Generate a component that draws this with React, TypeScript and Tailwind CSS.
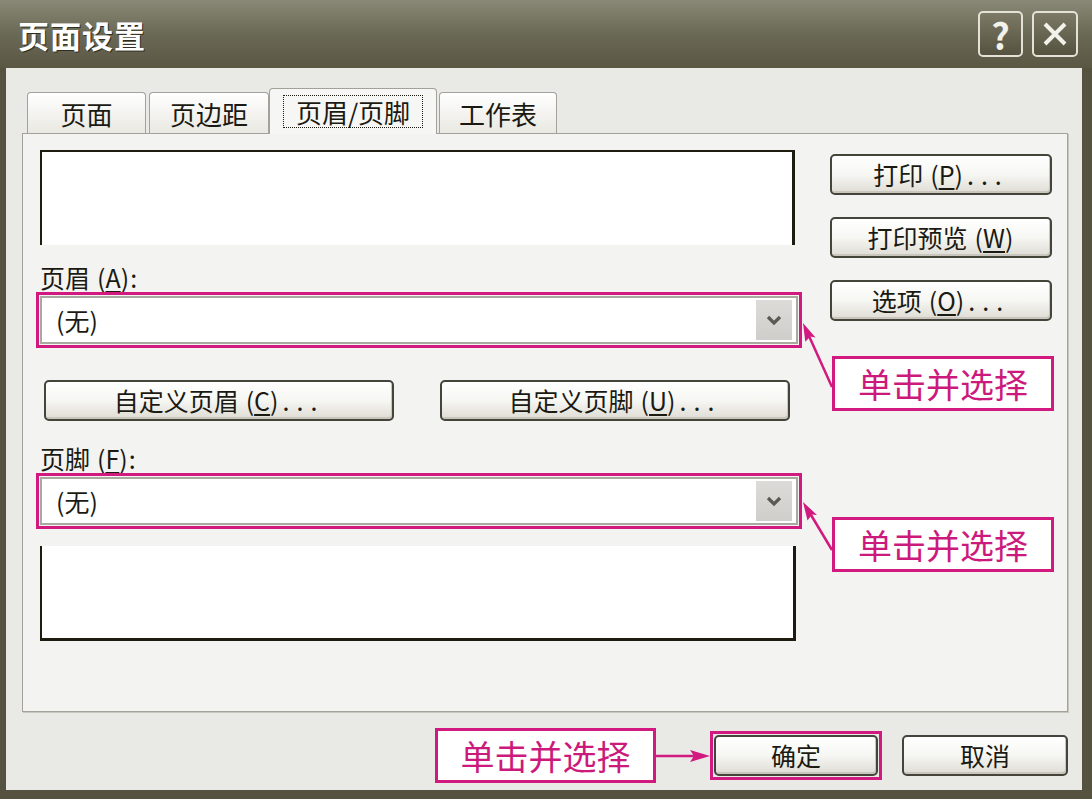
import type { ReactNode } from "react";

const font = "font-['Noto_Sans_CJK_SC','Noto_Sans',sans-serif]";

function Key({ k }: { k: string }) {
  return (
    <span className="ml-[7px] mr-[1px]">
      (<span className="underline underline-offset-[3px] decoration-[1.5px]">{k}</span>)
    </span>
  );
}

function Dots() {
  return <span className="ml-[3px] tracking-[7px]">...</span>;
}

function Button({ children, className = "" }: { children: ReactNode; className?: string }) {
  return (
    <div
      className={`flex h-[41px] items-center justify-center rounded-[5px] border-2 border-[#45443a] bg-gradient-to-b from-white via-[#f6f6f3] to-[#dedcd4] text-[25px] leading-none text-[#1b1a12] shadow-[inset_-1px_-2px_0_#c9c7bd] ${className}`}
    >
      {children}
    </div>
  );
}

function Select() {
  return (
    <div className="h-[56px] border-[3px] border-[#d2197f] p-px">
      <div className="flex h-full items-center border-2 border-[#a9a8a1] bg-white pl-[14px] pr-[4px]">
        <span className="text-[25px] leading-none text-[#1b1a12]">(无)</span>
        <div className="ml-auto flex h-[40px] w-[36px] items-center justify-center bg-gradient-to-b from-[#dcdbd8] to-[#cfcecb]">
          <svg width="16" height="12" viewBox="0 0 16 12">
            <path d="M2 3 L8 9 L14 3" fill="none" stroke="#5b5a52" strokeWidth="3.2" />
          </svg>
        </div>
      </div>
    </div>
  );
}

function Callout({ className = "" }: { className?: string }) {
  return (
    <div
      className={`flex h-[55px] items-center justify-center border-[3px] border-[#d2197f] bg-white text-[34px] leading-none text-[#cc1a7c] ${className}`}
    >
      单击并选择
    </div>
  );
}

function Tab({ label, active = false, w }: { label: string; active?: boolean; w: string }) {
  if (active) {
    return (
      <div
        className={`relative z-10 -mb-px flex h-[46px] ${w} items-center justify-center rounded-t-[4px] border border-b-0 border-[#a3a199] bg-[#f6f6f4]`}
      >
        <span className="border border-dotted border-[#1b1a12] px-[12px] py-[1px] text-[26px] leading-[29px] text-[#1b1a12]">
          {label}
        </span>
      </div>
    );
  }
  return (
    <div
      className={`flex h-[41px] ${w} items-center justify-center rounded-t-[4px] border border-b-0 border-[#a3a199] bg-gradient-to-b from-white to-[#e9e8e2] pt-[2px] text-[26px] leading-none text-[#1b1a12]`}
    >
      {label}
    </div>
  );
}

export default function App() {
  return (
    <div className={`relative flex h-[799px] w-[1092px] flex-col bg-[#55533f] ${font}`}>
      {/* title bar */}
      <div className="flex h-[68px] shrink-0 items-center bg-gradient-to-b from-[#8a8977] via-[#6a6955] to-[#5a5843] pl-[18px] pr-[14px]">
        <span className="text-[31px] font-bold leading-none tracking-[1px] text-white [text-shadow:1px_1px_0_#2f2d1f]">
          页面设置
        </span>
        <div className="ml-auto flex gap-[9px]">
          <div className="flex h-[46px] w-[45px] items-center justify-center rounded-[5px] border-2 border-[#e4e2d6] bg-gradient-to-b from-[#7c7a66] to-[#55533f]">
            <span className="text-[36px] font-bold leading-none text-[#f2f1ea]">?</span>
          </div>
          <div className="flex h-[46px] w-[46px] items-center justify-center rounded-[5px] border-2 border-[#e4e2d6] bg-gradient-to-b from-[#7c7a66] to-[#55533f]">
            <svg width="28" height="28" viewBox="0 0 28 28">
              <path d="M4 4 L24 24 M24 4 L4 24" stroke="#f2f1ea" strokeWidth="4" />
            </svg>
          </div>
        </div>
      </div>

      {/* body */}
      <div className="ml-[6px] mr-[10px] mb-[9px] flex flex-1 flex-col bg-[#e9e9e5] pl-[16px] pr-[14px] pt-[20px]">
        <div className="flex h-[45px] items-end pl-[5px]">
          <Tab label="页面" w="w-[119px]" />
          <div className="w-[3px]" />
          <Tab label="页边距" w="w-[120px]" />
          <Tab label="页眉/页脚" w="w-[168px]" active />
          <div className="w-[2px]" />
          <Tab label="工作表" w="w-[118px]" />
        </div>

        {/* tab panel */}
        <div className="flex h-[579px] border border-[#a3a199] bg-[#f3f3f1] pl-[13px] shadow-[1px_1px_0_#c8c6bd]">
          <div className="flex w-[766px] flex-col">
            <div className="ml-[4px] mt-[16px] h-[95px] w-[755px] border-l-2 border-r-[3px] border-t-2 border-[#1e1c10] bg-white" />
            <div className="mt-[17px] flex h-[30px] items-center pl-[4px] text-[25px] leading-none text-[#1b1a12]">
              页眉<Key k="A" />:
            </div>
            <Select />
            <div className="mt-[32px] flex gap-[46px] pl-[8px]">
              <Button className="w-[350px]">
                自定义页眉<Key k="C" />
                <Dots />
              </Button>
              <Button className="w-[350px]">
                自定义页脚<Key k="U" />
                <Dots />
              </Button>
            </div>
            <div className="mt-[22px] flex h-[30px] items-center pl-[4px] text-[25px] leading-none text-[#1b1a12]">
              页脚<Key k="F" />:
            </div>
            <Select />
            <div className="ml-[4px] mt-[17px] h-[95px] w-[756px] border-b-[3px] border-l-2 border-r-[3px] border-[#1e1c10] bg-white" />
          </div>

          <div className="ml-[28px] flex w-[224px] flex-col">
            <Button className="mt-[20px] w-[222px]">
              打印<Key k="P" />
              <Dots />
            </Button>
            <Button className="mt-[22px] w-[222px]">
              打印预览<Key k="W" />
            </Button>
            <Button className="mt-[22px] w-[222px]">
              选项<Key k="O" />
              <Dots />
            </Button>
            <Callout className="ml-[2px] mt-[35px] w-[222px]" />
            <Callout className="ml-[2px] mt-[106px] w-[222px]" />
          </div>
        </div>

        {/* bottom buttons */}
        <div className="mt-[15px] flex h-[57px] items-center justify-end">
          <Callout className="w-[221px]" />
          <svg width="54" height="20" viewBox="0 0 54 20" className="shrink-0">
            <line x1="0" y1="10" x2="40" y2="10" stroke="#d2197f" strokeWidth="2.5" />
            <polygon points="54,10 34,4 38,10 34,16" fill="#d2197f" />
          </svg>
          <div className="border-[3px] border-[#d2197f] p-px">
            <Button className="w-[164px]">确定</Button>
          </div>
          <Button className="ml-[20px] w-[166px]">取消</Button>
        </div>
      </div>

      {/* callout arrows */}
      <svg className="pointer-events-none absolute left-0 top-0" width="1092" height="799" viewBox="0 0 1092 799">
        <line x1="832" y1="387" x2="809" y2="336" stroke="#d2197f" strokeWidth="2.5" />
        <polygon points="803,323 815.5,337.6 810.4,336.4 805.3,341.8" fill="#d2197f" />
        <line x1="832" y1="550" x2="811" y2="515" stroke="#d2197f" strokeWidth="2.5" />
        <polygon points="803,502 817,515 812,514.5 807.5,520.5" fill="#d2197f" />
      </svg>
    </div>
  );
}
